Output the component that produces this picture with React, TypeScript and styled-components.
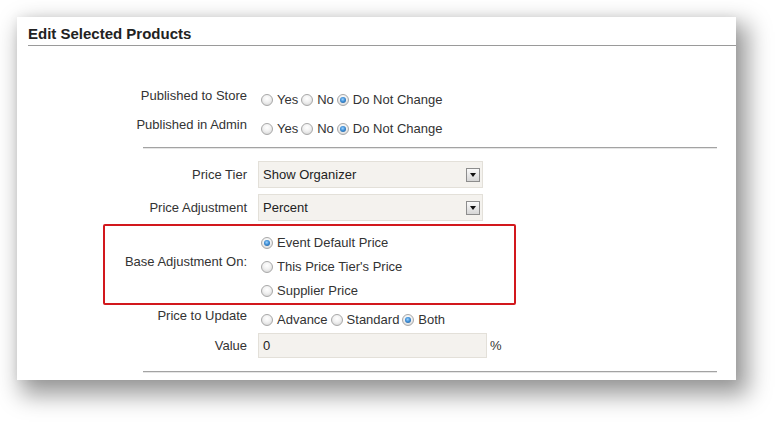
import React from 'react';
import styled, { createGlobalStyle } from 'styled-components';

const GlobalStyle = createGlobalStyle`
	html, body {
		margin: 0;
		padding: 0;
		background: #fff;
	}
	body {
		font-family: 'Liberation Sans', Arial, sans-serif;
		font-size: 13px;
		color: #333;
	}
`;

type RadioOption = { label: string; checked?: boolean };

const RadioGroup = ({ options, stacked }: { options: RadioOption[]; stacked?: boolean }) => {
	return (
		<RadioList $stacked={stacked}>
			{options.map((o) => (
				<RadioItem key={o.label} $stacked={stacked}>
					<RadioDot $checked={o.checked} />
					{o.label}
				</RadioItem>
			))}
		</RadioList>
	);
};

const Select = ({ value }: { value: string }) => {
	return (
		<SelectBox>
			<SelectValue>{value}</SelectValue>
			<SelectButton>
				<SelectArrow />
			</SelectButton>
		</SelectBox>
	);
};

const App = () => {
	return (
		<Page>
			<GlobalStyle />
			<Panel>
				<PanelTitle>Edit Selected Products</PanelTitle>
				<PublishSection>
					<Row $gap={9}>
						<Label>Published to Store</Label>
						<RadioGroup options={[{ label: 'Yes' }, { label: 'No' }, { label: 'Do Not Change', checked: true }]} />
					</Row>
					<Row>
						<Label>Published in Admin</Label>
						<RadioGroup options={[{ label: 'Yes' }, { label: 'No' }, { label: 'Do Not Change', checked: true }]} />
					</Row>
				</PublishSection>
				<Divider $top={10} />
				<PriceSection>
					<Row $gap={6}>
						<Label $line={27}>Price Tier</Label>
						<Select value="Show Organizer" />
					</Row>
					<Row>
						<Label $line={27}>Price Adjustment</Label>
						<Select value="Percent" />
					</Row>
					<Highlight>
						<Row $center>
							<Label $width={142} $lift={6}>Base Adjustment On:</Label>
							<RadioGroup
								stacked
								options={[
									{ label: 'Event Default Price', checked: true },
									{ label: "This Price Tier's Price" },
									{ label: 'Supplier Price' },
								]}
							/>
						</Row>
					</Highlight>
					<Row $gap={5}>
						<Label>Price to Update</Label>
						<RadioGroup options={[{ label: 'Advance' }, { label: 'Standard' }, { label: 'Both', checked: true }]} />
					</Row>
					<Row>
						<Label $line={25}>Value</Label>
						<ValueInput>0</ValueInput>
						<Unit>%</Unit>
					</Row>
				</PriceSection>
				<Divider $top={13} />
			</Panel>
		</Page>
	);
};

const Page = styled.div`
	padding: 17px 0 0 17px;
	height: 411px;
	overflow: hidden;
`;

const Panel = styled.div`
	box-sizing: border-box;
	width: 719px;
	background: #fff;
	padding-bottom: 8px;
	box-shadow: 8px 11px 22px 4px rgba(0, 0, 0, 0.4), 0 0 10px rgba(0, 0, 0, 0.05);
`;

const PanelTitle = styled.div`
	margin-left: 11px;
	padding: 8px 0 3px;
	border-bottom: 1px solid #9a9a9a;
	font-size: 15px;
	line-height: 17px;
	font-weight: 700;
	color: #222;
`;

const PublishSection = styled.div`
	padding-top: 42px;
`;

const PriceSection = styled.div`
	padding-top: 13px;
`;

const Divider = styled.div<{ $top: number }>`
	margin: ${(p) => p.$top}px 19px 0 126px;
	height: 1px;
	background: #a3a3a3;
	box-shadow: 0 1px 0 #e6e6e6;
`;

const Row = styled.div<{ $gap?: number; $center?: boolean }>`
	display: flex;
	align-items: ${(p) => (p.$center ? 'center' : 'flex-start')};
	margin-bottom: ${(p) => p.$gap ?? 0}px;
`;

const Label = styled.div<{ $width?: number; $line?: number; $lift?: number }>`
	box-sizing: border-box;
	flex: none;
	width: ${(p) => p.$width ?? 230}px;
	margin-right: 11px;
	padding-bottom: ${(p) => p.$lift ?? 0}px;
	text-align: right;
	line-height: ${(p) => p.$line ?? 16}px;
	color: #333;
	white-space: nowrap;
`;

const RadioList = styled.div<{ $stacked?: boolean }>`
	display: flex;
	flex-direction: ${(p) => (p.$stacked ? 'column' : 'row')};
	gap: ${(p) => (p.$stacked ? 0 : 3)}px;
	padding-left: 3px;
	padding-top: ${(p) => (p.$stacked ? 5 : 4)}px;
`;

const RadioItem = styled.label<{ $stacked?: boolean }>`
	display: flex;
	align-items: center;
	line-height: ${(p) => (p.$stacked ? 24 : 16)}px;
	height: ${(p) => (p.$stacked ? 24 : 16)}px;
	color: #333;
	white-space: nowrap;
`;

const RadioDot = styled.span<{ $checked?: boolean }>`
	position: relative;
	box-sizing: border-box;
	width: 12px;
	height: 12px;
	margin-right: 4px;
	border-radius: 50%;
	border: 1px solid #a8a8a8;
	background: radial-gradient(circle at 50% 35%, #ffffff 0%, #f1f1f1 45%, #cfcfcf 100%);
	&::after {
		content: '';
		display: ${(p) => (p.$checked ? 'block' : 'none')};
		position: absolute;
		left: 2px;
		top: 2px;
		width: 6px;
		height: 6px;
		border-radius: 50%;
		background: radial-gradient(circle at 45% 40%, #9fd3ff 0%, #3f8fd6 45%, #1b4f86 100%);
	}
`;

const SelectBox = styled.div`
	box-sizing: border-box;
	display: flex;
	align-items: center;
	width: 225px;
	height: 27px;
	padding: 0 2px 0 4px;
	background: #f4f2ee;
	border: 1px solid #e3e0d9;
`;

const SelectValue = styled.div`
	flex: 1;
	color: #222;
	white-space: nowrap;
`;

const SelectButton = styled.div`
	box-sizing: border-box;
	display: flex;
	align-items: center;
	justify-content: center;
	width: 14px;
	height: 14px;
	border: 1px solid #8d8d8d;
	background: linear-gradient(#fafafa, #d6d6d6);
`;

const SelectArrow = styled.div`
	width: 0;
	height: 0;
	margin-top: 1px;
	border-left: 3.5px solid transparent;
	border-right: 3.5px solid transparent;
	border-top: 4px solid #111;
`;

const Highlight = styled.div`
	box-sizing: border-box;
	width: 413px;
	height: 81px;
	margin: 3px 0 3px 86px;
	border: 2px solid #d2181d;
	border-radius: 2px;
`;

const ValueInput = styled.div`
	box-sizing: border-box;
	width: 229px;
	height: 25px;
	padding-left: 4px;
	line-height: 23px;
	background: #f4f2ee;
	border: 1px solid #e3e0d9;
	color: #222;
`;

const Unit = styled.div`
	margin-left: 3px;
	line-height: 25px;
	color: #333;
`;

export default App;
